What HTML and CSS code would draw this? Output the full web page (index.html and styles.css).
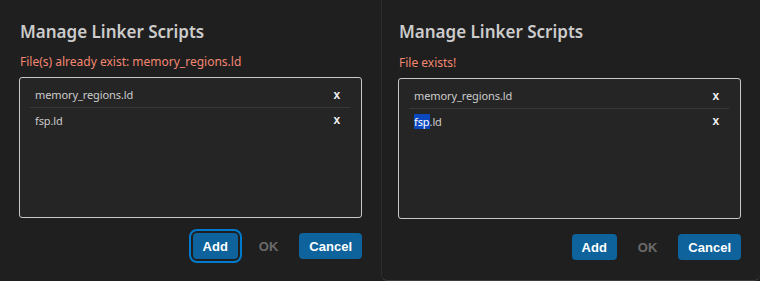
FILE: index.html
```html
<!DOCTYPE html>
<html lang="en">
<head>
  <meta charset="UTF-8">
  <title>Manage Linker Scripts</title>
  <link rel="stylesheet" href="styles.css">
</head>
<body>
  <div class="screens">

    <!-- first state: add pressed, duplicate reported -->
    <div class="dialog">
      <h2 class="dialog-title">Manage Linker Scripts</h2>
      <p class="dialog-error">File(s) already exist: memory_regions.ld</p>
      <div class="file-list">
        <div class="file-row">
          <span class="file-name">memory_regions.ld</span>
          <span class="file-remove">x</span>
        </div>
        <div class="file-row">
          <span class="file-name">fsp.ld</span>
          <span class="file-remove">x</span>
        </div>
      </div>
      <div class="dialog-actions">
        <button class="btn btn-primary focused">Add</button>
        <button class="btn btn-disabled">OK</button>
        <button class="btn btn-primary">Cancel</button>
      </div>
    </div>

    <!-- second state: editing a row -->
    <div class="dialog dialog-second">
      <h2 class="dialog-title">Manage Linker Scripts</h2>
      <p class="dialog-error">File exists!</p>
      <div class="file-list">
        <div class="file-row">
          <span class="file-name">memory_regions.ld</span>
          <span class="file-remove">x</span>
        </div>
        <div class="file-row">
          <span class="file-name"><span class="selected">fsp</span>.ld</span>
          <span class="file-remove">x</span>
        </div>
      </div>
      <div class="dialog-actions">
        <button class="btn btn-primary">Add</button>
        <button class="btn btn-disabled">OK</button>
        <button class="btn btn-primary">Cancel</button>
      </div>
    </div>

  </div>
</body>
</html>
```

FILE: styles.css
```css
* {
  margin: 0;
  padding: 0;
  box-sizing: border-box;
}

body {
  background: #1f1f1f;
  font-family: 'Noto Sans', 'Open Sans', sans-serif;
  color: #cccccc;
  width: 760px;
  height: 281px;
  overflow: hidden;
}

.screens {
  display: flex;
  height: 281px;
}

.dialog {
  width: 381px;
  padding: 20px 19px 0 19px;
  background: #1f1f1f;
}

.dialog-second {
  width: 379px;
  padding-left: 16px;
  padding-right: 19px;
  border-left: 1px solid #2e2e2e;
  border-bottom: 1px solid #3c3c3c;
  border-radius: 0 0 6px 6px;
}

.dialog-title {
  font-size: 17px;
  font-weight: 600;
  line-height: 24px;
  padding-left: 1px;
  color: #cccccc;
}

.dialog-error {
  margin-top: 9px;
  font-size: 12px;
  line-height: 18px;
  padding-left: 1px;
  color: #f48771;
}

.dialog-second .dialog-error {
  margin-top: 10px;
}

.file-list {
  margin-top: 6px;
  height: 141px;
  border: 1px solid #c8c8c8;
  border-radius: 3px;
  background: #252526;
  padding: 4px 11px 0 10px;
}

.file-row {
  display: flex;
  align-items: center;
  justify-content: space-between;
  height: 25px;
  padding: 0 10px 0 5px;
  font-size: 11px;
  letter-spacing: -0.1px;
}

.file-row + .file-row {
  border-top: 1px solid #383838;
}

.file-name {
  color: #cccccc;
}

.selected {
  background: #0b48bd;
  color: #ffffff;
}

.file-remove {
  font-family: 'Liberation Sans', Arial, sans-serif;
  font-weight: bold;
  font-size: 12px;
  color: #f0f0f0;
}

.dialog-actions {
  display: flex;
  justify-content: flex-end;
  gap: 11px;
  margin-top: 15px;
}

.btn {
  height: 26px;
  padding: 0 10px;
  border: none;
  border-radius: 4px;
  font-family: 'Liberation Sans', Arial, sans-serif;
  font-size: 13px;
  font-weight: bold;
}

.btn-primary {
  background: #0e639c;
  color: #ffffff;
}

.btn-disabled {
  background: transparent;
  color: #6b6b6b;
}

.focused {
  outline: 2px solid #007acc;
  outline-offset: 2px;
}
```
